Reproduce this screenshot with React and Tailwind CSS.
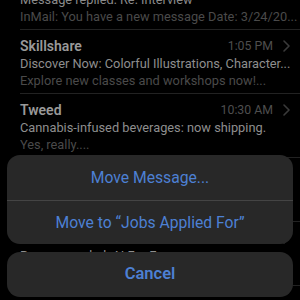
import React from "react";

const rows = [
  {
    from: "Skillshare",
    time: "1:05 PM",
    line1: "Discover Now: Colorful Illustrations, Character...",
    line2: "Explore new classes and workshops now!...",
  },
  {
    from: "Tweed",
    time: "10:30 AM",
    line1: "Cannabis-infused beverages: now shipping.",
    line2: "Yes, really....",
  },
  {
    from: "Indeed",
    time: "9:41 AM",
    line1: "New jobs for you",
    line2: "See the latest openings...",
  },
  {
    from: "Coursera",
    time: "9:12 AM",
    line1: "Recommended: AI For Everyone",
    line2: "Start learning today...",
  },
];

const Chevron = () => (
  <svg width="7" height="12" viewBox="0 0 7 12" fill="none">
    <path d="M1 1l5 5-5 5" stroke="#3a3a3a" strokeWidth="1.6" strokeLinecap="round" strokeLinejoin="round" />
  </svg>
);

const App = () => {
  return (
    <div
      className="relative w-[300px] h-[300px] overflow-hidden bg-black"
      style={{ fontFamily: "Roboto, 'Liberation Sans', sans-serif" }}
    >
      {/* mail list behind the sheet */}
      <div className="ml-[20px]">
        <div className="-mt-[9px] pb-[4px] border-b border-[#222]">
          <div className="text-[12.8px] leading-[17px] text-[#8a8a8a] whitespace-nowrap">Message replied: Re: Interview</div>
          <div className="text-[12.8px] leading-[17px] text-[#4a4a4a] whitespace-nowrap">InMail: You have a new message Date: 3/24/20...</div>
        </div>
        {rows.map((r) => (
          <div key={r.from} className="pt-[7px] pb-[4px] pr-[10px] border-b border-[#222]">
            <div className="flex items-center h-[18px]">
              <span className="text-[14px] font-semibold text-[#999] flex-1">{r.from}</span>
              <span className="text-[12.3px] text-[#4e4e4e] mr-[10px]">{r.time}</span>
              <Chevron />
            </div>
            <div className="text-[12.8px] leading-[17px] text-[#8e8e8e] whitespace-nowrap overflow-hidden">{r.line1}</div>
            <div className="text-[12.8px] leading-[17px] text-[#4a4a4a] whitespace-nowrap overflow-hidden">{r.line2}</div>
          </div>
        ))}
      </div>

      {/* action sheet */}
      <div className="absolute left-[7px] right-[7px] bottom-[3px] flex flex-col gap-[8px]">
        <div className="rounded-[13px] bg-[#282828] overflow-hidden">
          <div className="h-[46px] flex items-center justify-center text-[15.7px] text-[#4d80d4] border-b border-[#444]">
            Move Message...
          </div>
          <div className="h-[43px] flex items-center justify-center text-[15.7px] text-[#4d80d4]">
            Move to “Jobs Applied For”
          </div>
        </div>
        <div className="h-[45px] rounded-[13px] bg-[#282828] flex items-center justify-center text-[16.5px] font-semibold text-[#4d80d4]">
          Cancel
        </div>
      </div>
    </div>
  );
};

export default App;
